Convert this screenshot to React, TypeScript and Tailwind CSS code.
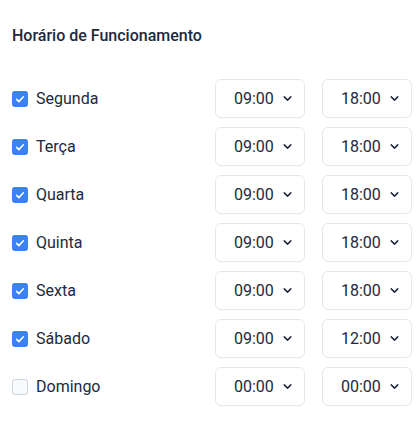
import React, { useState } from 'react';
import { ChevronDown } from 'lucide-react';

type Day = { name: string; open: string; close: string; active: boolean };

const initialDays: Day[] = [
  { name: 'Segunda', open: '09:00', close: '18:00', active: true },
  { name: 'Terça', open: '09:00', close: '18:00', active: true },
  { name: 'Quarta', open: '09:00', close: '18:00', active: true },
  { name: 'Quinta', open: '09:00', close: '18:00', active: true },
  { name: 'Sexta', open: '09:00', close: '18:00', active: true },
  { name: 'Sábado', open: '09:00', close: '12:00', active: true },
  { name: 'Domingo', open: '00:00', close: '00:00', active: false },
];

function TimeSelect({ value }: { value: string }) {
  return (
    <button className="w-[90px] h-[39px] flex items-center gap-[7px] pl-[18px] border border-slate-200 rounded-md bg-white text-[16px] text-slate-800">
      <span>{value}</span>
      <ChevronDown className="h-[13px] w-[13px] text-slate-800" strokeWidth={2.75} />
    </button>
  );
}

export default function App() {
  const [days, setDays] = useState(initialDays);

  const toggle = (i: number) =>
    setDays((d) => d.map((day, j) => (j === i ? { ...day, active: !day.active } : day)));

  return (
    <div className="min-h-[430px] bg-white pl-3 pr-[6px] pt-[26px] font-['Roboto',sans-serif]">
      <h2 className="text-[16px] font-medium text-slate-800 leading-5">Horário de Funcionamento</h2>

      <div className="mt-[33px] flex flex-col gap-[9px]">
        {days.map((day, i) => (
          <div key={day.name} className="flex items-center">
            <label className="flex-1 flex items-center gap-2 cursor-pointer">
              <span
                onClick={() => toggle(i)}
                className={
                  day.active
                    ? 'h-4 w-4 rounded-[3px] bg-[#3b82f6] flex items-center justify-center'
                    : 'h-4 w-4 rounded-[3px] border border-slate-300 bg-slate-50'
                }
              >
                {day.active && (
                  <svg viewBox="0 0 16 16" className="h-3 w-3" fill="none">
                    <path d="M3.5 8.5l3 3 6-6.5" stroke="white" strokeWidth="2" strokeLinecap="round" strokeLinejoin="round" />
                  </svg>
                )}
              </span>
              <span className="text-[16px] text-slate-800">{day.name}</span>
            </label>
            <div className="flex gap-[17px]">
              <TimeSelect value={day.open} />
              <TimeSelect value={day.close} />
            </div>
          </div>
        ))}
      </div>
    </div>
  );
}
